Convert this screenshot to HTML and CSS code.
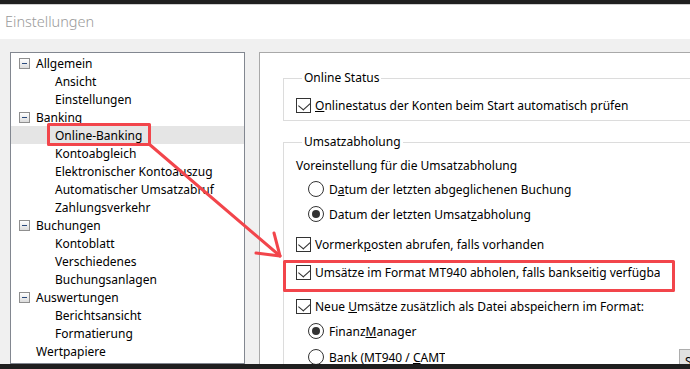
FILE: index.html
```html
<!DOCTYPE html>
<html lang="de">
<head>
    <meta charset="UTF-8">
    <title>Einstellungen</title>
    <link rel="stylesheet" href="styles.css">
</head>
<body>

    <div class="topbar"></div>
    <div class="titlebar">Einstellungen</div>

    <div class="main">
        <!-- Navigation tree -->
        <div class="tree">
            <div class="row l0"><span class="box"></span>Allgemein</div>
            <div class="row l1">Ansicht</div>
            <div class="row l1">Einstellungen</div>
            <div class="row l0"><span class="box"></span>Banking</div>
            <div class="row l1 sel">Online-Banking</div>
            <div class="row l1">Kontoabgleich</div>
            <div class="row l1">Elektronischer Kontoauszug</div>
            <div class="row l1">Automatischer Umsatzabruf</div>
            <div class="row l1">Zahlungsverkehr</div>
            <div class="row l0"><span class="box"></span>Buchungen</div>
            <div class="row l1">Kontoblatt</div>
            <div class="row l1">Verschiedenes</div>
            <div class="row l1">Buchungsanlagen</div>
            <div class="row l0"><span class="box"></span>Auswertungen</div>
            <div class="row l1">Berichtsansicht</div>
            <div class="row l1">Formatierung</div>
            <div class="row l0 leaf">Wertpapiere</div>
            <div class="row l0"><span class="box"></span>Benutzerverwaltung</div>
        </div>

        <!-- Settings page -->
        <div class="page">
            <fieldset class="group first">
                <legend>Online Status</legend>
                <label class="opt">
                    <span class="check on"></span>
                    <span><u>O</u>nlinestatus der Konten beim Start automatisch prüfen</span>
                </label>
            </fieldset>

            <fieldset class="group">
                <legend>Umsatzabholung</legend>
                <div class="opt caption">Voreinstellung für die Umsatzabholung</div>
                <label class="opt sub r1">
                    <span class="radio"></span>
                    <span>D<u>a</u>tum der letzten abgeglichenen Buchung</span>
                </label>
                <label class="opt sub r2">
                    <span class="radio on"></span>
                    <span>Datum der letzten Umsat<u>z</u>abholung</span>
                </label>
                <label class="opt c1">
                    <span class="check on"></span>
                    <span>Vormerk<u>p</u>osten abrufen, falls vorhanden</span>
                </label>
                <label class="opt c2">
                    <span class="check on"></span>
                    <span class="clip wide">Umsätze im Format MT940 abholen, falls bankseitig verfügbar</span>
                </label>
                <label class="opt c3">
                    <span class="check on"></span>
                    <span>Neue <u>U</u>msätze zusätzlich als Datei abspeichern im Format:</span>
                </label>
                <label class="opt sub r3">
                    <span class="radio on"></span>
                    <span>Finanz<u>M</u>anager</span>
                </label>
                <label class="opt sub r4">
                    <span class="radio"></span>
                    <span class="clip narrow">Bank (MT940 / <u>C</u>AMT)</span>
                </label>
            </fieldset>

            <button class="side-btn">Speichern</button>
        </div>
    </div>

    <div class="bottombar"></div>

    <!-- Red annotation drawn over the screenshot -->
    <svg class="annot" width="690" height="369" viewBox="0 0 690 369">
        <rect x="48.5" y="124.5" width="101" height="20" />
        <line x1="149" y1="144" x2="280" y2="256" />
        <polyline points="256,253 280,256 274,233" />
        <rect x="284.5" y="261.5" width="389" height="29" />
    </svg>

</body>
</html>
```

FILE: styles.css
```css
* {
    margin: 0;
    padding: 0;
    box-sizing: border-box;
}

body {
    width: 690px;
    height: 369px;
    overflow: hidden;
    font-family: 'Noto Sans', 'Open Sans', sans-serif;
    font-size: 12px;
    color: #000;
    background: #f0f0f0;
    position: relative;
}

.topbar {
    height: 5px;
    background: #1f1f1f;
    border-bottom: 1px solid #cfcfcf;
}

.titlebar {
    height: 34px;
    background: #fff;
    padding-left: 5px;
    line-height: 32px;
    font-size: 14.5px;
    font-weight: 300;
    color: #9a9a9a;
}

/* Main area */
.main {
    display: flex;
    gap: 14px;
    height: 325px;
    padding: 13px 0 0 10px;
    overflow: hidden;
    background: #f0f0f0;
}

/* Tree */
.tree {
    width: 235px;
    flex-shrink: 0;
    background: #fff;
    border: 1px solid #828790;
    padding-top: 1px;
}

.row {
    height: 18px;
    display: flex;
    align-items: center;
    white-space: nowrap;
}

.row.l0 {
    padding-left: 8px;
}

.row.l0.leaf {
    padding-left: 25px;
}

.row.l1 {
    padding-left: 44px;
}

.row.sel {
    background: #e5e5e5;
}

.box {
    width: 11px;
    height: 11px;
    margin-right: 6px;
    border: 1px solid #8f8f8f;
    background: linear-gradient(to bottom, #fff, #dcdcdc);
    position: relative;
}

.box::after {
    content: "";
    position: absolute;
    left: 2px;
    right: 2px;
    top: 4px;
    height: 1px;
    background: #2b4a7c;
}

/* Settings page */
.page {
    flex: 1;
    position: relative;
    background: #fff;
    border-top: 1px solid #a9a9a9;
    border-left: 1px solid #a9a9a9;
    padding-left: 23px;
    overflow: hidden;
}

.group {
    width: 480px;
    border: 1px solid #dcdcdc;
    padding: 0 0 5px 12px;
    margin-top: 13px;
}

.group.first {
    margin-top: 17px;
}

.group legend {
    margin-left: 6px;
    padding: 0 2px;
    line-height: 16px;
}

.opt {
    display: flex;
    align-items: center;
    height: 20px;
    white-space: nowrap;
}

.group.first .opt {
    margin-top: 9px;
}

.caption {
    margin-top: 5px;
}

.opt.sub {
    margin-left: 12px;
}

.r1 { margin-top: 4px; }
.r2 { margin-top: 5px; }
.c1 { margin-top: 10px; }
.c2 { margin-top: 8px; }
.c3 { margin-top: 14px; }
.r3 { margin-top: 5px; }
.r4 { margin-top: 6px; }

.clip {
    overflow: hidden;
}

.clip.wide {
    width: 345px;
}

.clip.narrow {
    width: 116px;
}

/* Checkbox */
.check {
    width: 15px;
    height: 15px;
    margin-right: 4px;
    border: 1px solid #333;
    background: #fff;
    position: relative;
    flex-shrink: 0;
}

.check.on::after {
    content: "";
    position: absolute;
    left: 3px;
    top: 1px;
    width: 6px;
    height: 9px;
    border-right: 1px solid #333;
    border-bottom: 1px solid #333;
    transform: rotate(40deg) skewX(-8deg);
    transform-origin: 60% 60%;
}

/* Radio */
.radio {
    width: 16px;
    height: 16px;
    margin-right: 5px;
    border: 1px solid #333;
    border-radius: 50%;
    background: #fff;
    position: relative;
    flex-shrink: 0;
}

.radio.on::after {
    content: "";
    position: absolute;
    left: 3px;
    top: 3px;
    width: 8px;
    height: 8px;
    border-radius: 50%;
    background: #333;
}

.side-btn {
    position: absolute;
    left: 419px;
    top: 296px;
    width: 60px;
    height: 24px;
    background: #e1e1e1;
    border: 1px solid #adadad;
    font-family: inherit;
    font-size: 12px;
    text-align: left;
    padding-left: 5px;
}

.bottombar {
    height: 5px;
    background: #1f1f1f;
}

/* Annotation */
.annot {
    position: absolute;
    left: 0;
    top: 0;
    pointer-events: none;
}

.annot rect,
.annot line,
.annot polyline {
    fill: none;
    stroke: #f2454b;
    stroke-width: 3;
    stroke-linecap: round;
    stroke-linejoin: round;
}
```
